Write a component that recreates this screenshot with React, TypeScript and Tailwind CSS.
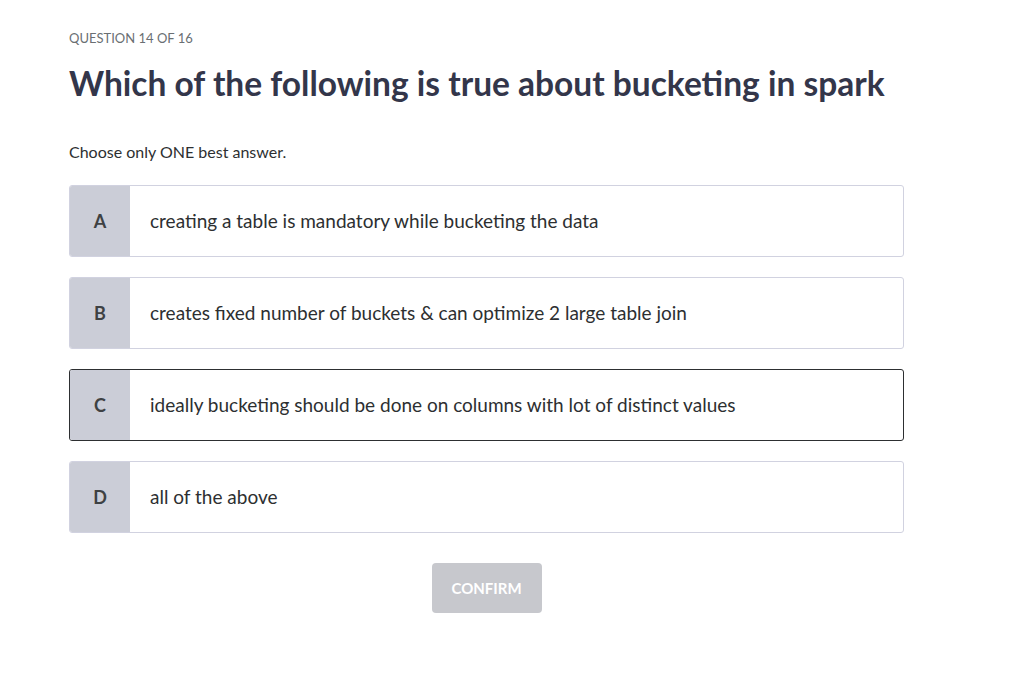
const options = [
  { key: "A", text: "creating a table is mandatory while bucketing the data" },
  { key: "B", text: "creates fixed number of buckets & can optimize 2 large table join" },
  { key: "C", text: "ideally bucketing should be done on columns with lot of distinct values" },
  { key: "D", text: "all of the above" },
];

const App = () => {
  const selected = "C";
  return (
    <div className="min-h-screen bg-white font-['Lato',sans-serif] text-[#2d2f31]">
      <div className="w-[835px] ml-[69px] pt-[30px]">
        <div className="text-[13px] leading-4 text-[#6a6f73] uppercase">Question 14 of 16</div>
        <h1 className="mt-[17px] text-[33.5px] leading-[40px] font-bold text-[#33364a]">
          Which of the following is true about bucketing in spark
        </h1>
        <p className="mt-[39px] text-[16px] leading-5">Choose only ONE best answer.</p>
        <div className="mt-[23px] flex flex-col gap-5">
          {options.map((o) => (
            <div
              key={o.key}
              className={`flex h-[72px] rounded-[3px] border overflow-hidden ${
                o.key === selected ? "border-[#2d2f31]" : "border-[#d1d2e0]"
              }`}
            >
              <div className="w-[60px] shrink-0 bg-[#cbcdd7] flex items-center justify-center text-[18px] font-bold text-[#3e4143]">
                {o.key}
              </div>
              <div className="flex items-center pl-5 text-[19px] text-[#2d2f31]">{o.text}</div>
            </div>
          ))}
        </div>
        <div className="mt-[30px] flex justify-center">
          <button className="w-[110px] h-[50px] rounded-[4px] bg-[#c7c8cd] text-white font-bold text-[15px]">
            CONFIRM
          </button>
        </div>
      </div>
    </div>
  );
};

export default App;
